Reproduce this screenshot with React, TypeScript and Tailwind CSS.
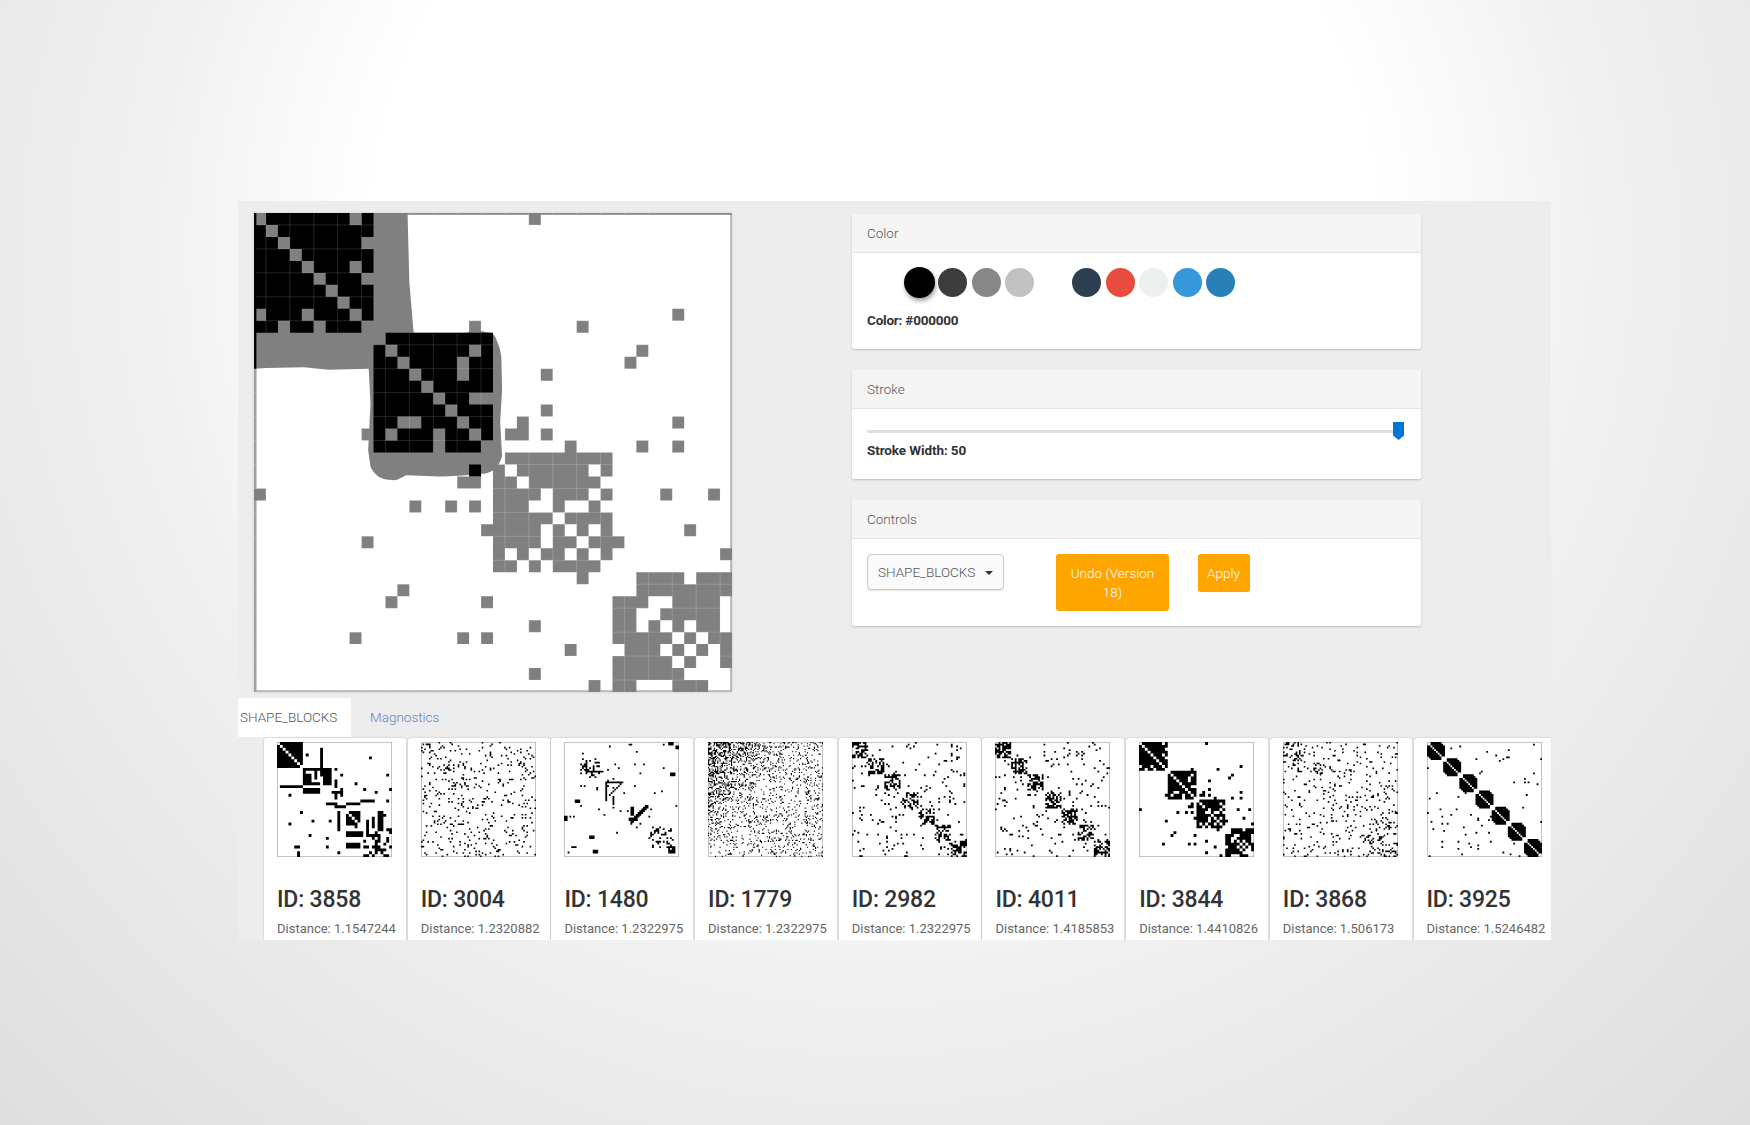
import React from "react";

// gray cells of the big matrix, row -> columns
const grayRows: string[] = [
  "0 8 23", "1", "2 9", "3", "4 8", "5 9", "6", "7", "0 4 8 35", "2 5 9 18 27",
  "10", "11 18 32", "12 17 31", "13 17 24", "14", "15 18-19", "16 24", "12-13 17 22 35", "9 11 15 18 21-22 24", "15 19 26 32 35",
  "21-29", "20 22-27 29", "17-18 20-21 23-28", "0 20-23 25-27 29 34 38", "13 16 18 20-22 25 28", "20-24 26-29", "19-23 25 27 29 36", "9 20-23 25-26 28-30", "20 22 24-25 27 29 39", "20-21 23 25-28",
  "27 32-35 37-39", "12 32-39", "11 19 30-32 35-38", "30-31 34-38", "23 30-31 33 35 37-38", "8 17 19 30-34 36 38-39", "26 31-33 35 37 39", "30-34 36 39", "23 30-35", "28 30-31 35-37",
];

const isGray: boolean[][] = grayRows.map((row) => {
  const line = new Array(40).fill(false);
  row.split(" ").forEach((part) => {
    const [a, b] = part.split("-").map(Number);
    for (let c = a; c <= (b ?? a); c++) line[c] = true;
  });
  return line;
});

function cellPath(list: [number, number][]) {
  return list.map(([r, c]) => `M${c} ${r}h1v1h-1z`).join("");
}

const inBlock = (r: number, c: number) => (r < 10 && c < 10) || (r >= 10 && r < 20 && c >= 10 && c < 20);

const grayCells: [number, number][] = [];
const blackCells: [number, number][] = [[21, 18]];
isGray.forEach((line, r) =>
  line.forEach((on, c) => {
    if (on) grayCells.push([r, c]);
    else if (inBlock(r, c)) blackCells.push([r, c]);
  })
);

const odd = [1, 3, 5, 7, 9, 11, 13, 15, 17, 19, 21, 23, 25, 27, 29, 31, 33, 35, 37, 39];

function BigMatrix() {
  return (
    <svg viewBox="0 0 40 40" preserveAspectRatio="none" className="block w-[478px] h-[479px] bg-white blur-[0.4px] shadow-[0_0_3px_rgba(0,0,0,0.12)]">
      {/* canvas edge, cells paint over it */}
      <path d="M0 0H40V40H0Z" fill="none" stroke="#b4b4b4" strokeWidth="0.3" />
      <path d="M0 0H40" fill="none" stroke="#8c8c8c" strokeWidth="0.3" />
      <path d="M0 0V40" fill="none" stroke="#a0a0a0" strokeWidth="0.42" />
      <path d={cellPath(grayCells)} fill="#808080" />
      {odd.map((i) => (
        <g key={i} stroke="#fff" strokeOpacity="0.25" strokeWidth="0.06">
          <line x1={i} y1="0" x2={i} y2="40" />
          <line x1="0" y1={i} x2="40" y2={i} />
        </g>
      ))}
      <path
        fill="#808080"
        d="M0 0H12.85L13 5.8L13.36 10H17.8Q18.3 9.7 18.6 9.8L19.8 10Q20.2 10.2 20.3 10.6Q20.6 11.2 20.7 12L20.76 14.75L20.6 17.5L20.76 20.3Q20.6 21 20 21.5Q19.5 21.8 18.9 21.8Q17 22 15.5 22L12.7 21.9Q11.9 22.4 11.6 22.3Q10.9 22.3 10.4 22Q9.9 21.6 9.75 21.2L9.55 19.8L9.75 15.9L9.6 13L6.2 13.1L4.2 12.88L1 12.95L0 13Z"
      />
      <path d={cellPath(blackCells)} fill="#000" />
      {[1, 3, 5, 7, 9].map((i) => (
        <g key={i} stroke="#fff" strokeOpacity="0.2" strokeWidth="0.06">
          <line x1={i} y1="0" x2={i} y2="10" />
          <line x1="0" y1={i} x2="10" y2={i} />
          <line x1={i + 10} y1="10" x2={i + 10} y2="20" />
          <line x1="10" y1={i + 10} x2="20" y2={i + 10} />
        </g>
      ))}
      <rect x="0" y="0" width="0.2" height="13" fill="#000" />
    </svg>
  );
}

type Block = { s: number; e: number; d: number; diag?: boolean; round?: boolean };
type Spec = {
  id: number;
  dist: string;
  n: number;
  bg: number;
  fall?: number;
  seed: number;
  blocks?: Block[];
  extra?: number[][];
  same?: boolean;
};

const ramp = (count: number, size: number, d: number, extra: Partial<Block> = {}, n = 64): Block[] =>
  Array.from({ length: count }, (_, i) => {
    const step = (n - size) / (count - 1);
    const s = Math.round(i * step);
    return { s, e: s + size, d, ...extra };
  });

// anti-diagonal run of cells, [row, col, w, h] each
const slant = (r: number, c: number, len: number, thick = 1) =>
  Array.from({ length: len }, (_, i) => [r + i, c - i, thick, thick]);

const thumbs: Spec[] = [
  {
    id: 3858, dist: "1.1547244", n: 40, bg: 0.025, seed: 11,
    blocks: [
      { s: 0, e: 9, d: 1, diag: true },
      { s: 24, e: 29, d: 1, diag: true },
      { s: 30, e: 40, d: 0.4 },
    ],
    // [row, col, w, h]
    extra: [[2, 15, 1, 10], [9, 9, 7, 1], [9, 9, 1, 6], [14, 9, 6, 1], [11, 10, 2, 3], [10, 13, 1, 3], [9, 16, 3, 6], [15, 1, 8, 1], [16, 9, 6, 2], [24, 21, 1, 7], [21, 24, 5, 1], [20, 29, 5, 1], [24, 35, 2, 7], [31, 24, 6, 2], [35, 24, 5, 2], [27, 31, 1, 5], [26, 33, 1, 4], [22, 20, 4, 1], [21, 17, 4, 1], [17, 19, 3, 1], [13, 20, 1, 3], [16, 22, 1, 3], [32, 32, 4, 1]],
  },
  { id: 3004, dist: "1.2320882", n: 72, bg: 0.08, seed: 23, blocks: [{ s: 1, e: 6, d: 0.4 }, { s: 14, e: 18, d: 0.45 }, { s: 22, e: 30, d: 0.25 }] },
  {
    id: 1480, dist: "1.2322975", n: 64, bg: 0.012, seed: 37,
    blocks: [{ s: 9, e: 20, d: 0.25 }, { s: 48, e: 60, d: 0.25 }, { s: 58, e: 62, d: 0.8 }],
    extra: [
      [22, 23, 10, 1], [22, 23, 1, 11], ...slant(23, 31, 7), [10, 12, 1, 8], [16, 14, 8, 1], [1, 36, 2, 1], [0, 58, 3, 2], [2, 62, 2, 2], [17, 59, 3, 2], [32, 6, 3, 2], [41, 0, 2, 3], [52, 14, 3, 2], [58, 4, 3, 1], [31, 27, 1, 4],
      ...slant(35, 45, 9, 2), [36, 37, 2, 5], [42, 36, 5, 2], [60, 16, 3, 2], ...slant(47, 53, 7),
    ],
  },
  { id: 1779, dist: "1.2322975", n: 100, bg: 0.12, fall: 0.42, seed: 41, extra: [[0, 5, 7, 1], [0, 11, 7, 1], [5, 0, 1, 6]] },
  { id: 2982, dist: "1.2322975", n: 64, bg: 0.055, seed: 53, blocks: ramp(7, 9, 0.5) },
  { id: 4011, dist: "1.4185853", n: 64, bg: 0.05, seed: 61, blocks: ramp(7, 9, 0.62) },
  { id: 3844, dist: "1.4410826", n: 40, bg: 0, seed: 1, same: true },
  { id: 3868, dist: "1.506173", n: 72, bg: 0.07, seed: 71, blocks: [{ s: 0, e: 14, d: 0.25 }, { s: 16, e: 26, d: 0.2 }, { s: 50, e: 72, d: 0.22 }] },
  { id: 3925, dist: "1.5246482", n: 64, bg: 0.022, seed: 83, blocks: ramp(7, 10, 1, { diag: true, round: true }) },
];

function thumbPath(t: Spec) {
  if (t.same) {
    return cellPath([...grayCells.filter(([r, c]) => !inBlock(r, c)), ...blackCells]);
  }
  let x = t.seed * 9973 + 17;
  const rnd = () => {
    x = (x * 16807) % 2147483647;
    return x / 2147483647;
  };
  const list: [number, number][] = [];
  for (let r = 0; r < t.n; r++) {
    for (let c = 0; c < t.n; c++) {
      let p = t.bg;
      if (t.fall) p += t.fall * Math.max(0, 1 - (r * 1.1 + c * 1.3) / t.n);
      t.blocks?.forEach((b) => {
        if (r >= b.s && r < b.e && c >= b.s && c < b.e) {
          p = b.d;
          const mid = (b.e - b.s - 1) / 2;
          if (b.round && Math.abs(r - b.s - mid) + Math.abs(c - b.s - mid) > mid * 1.6) p = 0;
          if (b.diag && r === c) p = 0;
        }
      });
      if (rnd() < p) list.push([r, c]);
    }
  }
  t.extra?.forEach(([r, c, w, h]) => {
    for (let i = 0; i < h; i++) for (let j = 0; j < w; j++) list.push([r + i, c + j]);
  });
  return cellPath(list.filter(([r, c]) => r < t.n && c < t.n));
}

function Thumb({ t }: { t: Spec }) {
  return (
    <div className="w-[142px] h-[202px] shrink-0 bg-white rounded-t-[3px] shadow-[0_0_2px_rgba(0,0,0,0.25)] pl-[13px] pt-[4px]">
      <svg viewBox={`0 0 ${t.n} ${t.n}`} className="block w-[115px] h-[115px] blur-[0.35px]">
        <rect x="0" y="0" width={t.n} height={t.n} fill="none" stroke="#aaa" strokeWidth={(t.n / 115) * 1.4} />
        <path d={thumbPath(t)} fill="#000" />
      </svg>
      <h3 className="mt-[26px] text-[23px] leading-[33px] font-medium text-[#333] tracking-[-0.2px]">ID: {t.id}</h3>
      <p className="mt-[3px] text-[13px] leading-[20px] text-[#666] whitespace-nowrap">Distance: {t.dist}</p>
    </div>
  );
}

function Panel({ title, className, children }: { title: string; className: string; children: React.ReactNode }) {
  return (
    <section className={`bg-white rounded-[2px] shadow-[0_1px_2px_rgba(0,0,0,0.2)] ${className}`}>
      <header className="h-[39px] bg-[#f5f5f5] border-b border-[#e4e4e4] px-[15px] flex items-center text-[13.5px] font-light text-[#555]">
        {title}
      </header>
      <div className="px-[15px]">{children}</div>
    </section>
  );
}

const grays = ["#3c3c3c", "#878787", "#c1c1c1"];
const flats = ["#2c3e50", "#e74c3c", "#ecf0f1", "#3498db", "#2980b9"];

export default function App() {
  return (
    <div className="min-h-[1125px] bg-[radial-gradient(circle_at_50%_250px,#ffffff_500px,#f6f6f6_650px,#f1f1f1_720px,#ebebeb_875px,#dedede_1237px)] pt-[201px] pl-[238px] [font-family:Roboto,sans-serif]">
      <div className="w-[1313px] h-[739px] bg-[#ededed] overflow-hidden">
        <div className="flex h-[497px]">
          <div className="pl-[15.5px] pt-[12px] shrink-0">
            <BigMatrix />
          </div>
          <div className="ml-[120.5px] pt-[13px] w-[568.5px] shrink-0 flex flex-col gap-[21px]">
            <Panel title="Color" className="h-[135px]">
              <div className="flex items-center ml-[37px] mt-[14px]">
                <span className="w-[31px] h-[31px] rounded-full bg-black shadow-[1px_3px_4px_rgba(0,0,0,0.35)] mr-[3.4px]" />
                <div className="flex gap-[4.5px]">
                  {grays.map((c) => (
                    <span key={c} className="block w-[29px] h-[29px] rounded-full" style={{ background: c }} />
                  ))}
                </div>
                <div className="flex gap-[4.5px] ml-[38px]">
                  {flats.map((c) => (
                    <span key={c} className="block w-[29px] h-[29px] rounded-full" style={{ background: c }} />
                  ))}
                </div>
              </div>
              <p className="mt-[12px] text-[13.5px] leading-[20px] font-bold text-[#333] tracking-[-0.2px]">Color: #000000</p>
            </Panel>
            <Panel title="Stroke" className="h-[109px]">
              <div className="relative h-[3px] bg-[#dedede] mt-[21px] rounded-full w-[537px]">
                <svg viewBox="0 0 11 18" className="absolute right-0 -top-[8px] w-[11px] h-[18px]">
                  <path d="M0 0H11V13.5L5.5 18L0 13.5Z" fill="#0275d8" />
                </svg>
              </div>
              <p className="mt-[7px] text-[13.5px] leading-[20px] font-bold text-[#333] tracking-[-0.1px]">Stroke Width: 50</p>
            </Panel>
            <Panel title="Controls" className="h-[126px]">
              <div className="flex items-start pt-[15px]">
                <div className="w-[137px] h-[36px] shrink-0 rounded-[4px] border border-[#ccc] bg-[#fafafa] shadow-[0_1px_1px_rgba(0,0,0,0.1)] flex items-center pl-[10px] pt-[1px] text-[13.5px] font-light text-[#555]">
                  SHAPE_BLOCKS
                  <span className="ml-[10px] w-0 h-0 border-x-[4px] border-x-transparent border-t-[4px] border-t-[#333]" />
                </div>
                <button className="ml-[52px] w-[113px] h-[57px] rounded-[3px] bg-[#ffa500] text-white text-[13.5px] leading-[19px] pt-[1px] font-light px-[12px]">
                  Undo (Version 18)
                </button>
                <button className="ml-[28.5px] w-[52px] h-[38px] rounded-[3px] bg-[#ffa500] text-white text-[13.5px] pt-[1px] font-light">
                  Apply
                </button>
              </div>
            </Panel>
          </div>
        </div>
        <div className="flex h-[39px] mb-[1px] items-stretch text-[13.5px] font-light">
          <div className="w-[113px] bg-white pl-[2px] flex items-center text-[#555] rounded-t-[2px]">SHAPE_BLOCKS</div>
          <div className="pl-[19px] flex items-center text-[#5d82bd]">Magnostics</div>
        </div>
        <div className="flex gap-[1.7px] pl-[26px]">
          {thumbs.map((t) => (
            <Thumb key={t.id} t={t} />
          ))}
        </div>
      </div>
    </div>
  );
}
